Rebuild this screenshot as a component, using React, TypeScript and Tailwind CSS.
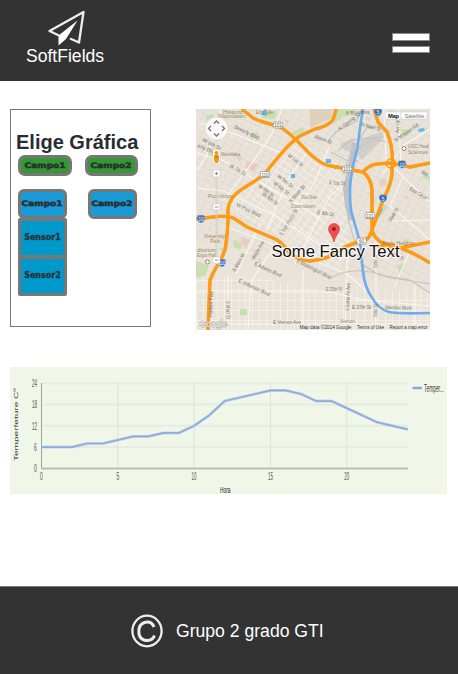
import React from "react";

const temps = [6, 6, 6, 7, 7, 8, 9, 9, 10, 10, 12, 15, 19, 20, 21, 22, 22, 21, 19, 19, 17, 15, 13, 12, 11];
const px = (h: number) => 31.5 + h * 15.26;
const py = (t: number) => 101.3 - t * 3.54;
const line = temps.map((t, h) => `${px(h)},${py(t)}`).join(" ");

type Label = [string, number, number, number, number];
const streets: Label[] = [
  ["Beverly Blvd", 234, 128, 26, 27],
  ["W 6th St", 202, 141, 28, 20],
  ["erly Blvd", 197, 147, 22, 20],
  ["W 7th St", 229, 167, 30, 18],
  ["W 1st St", 287, 156, 38, 18],
  ["W 8th St", 258, 187, 36, 18],
  ["W 9th St", 262, 195, 36, 18],
  ["W 5th St", 277, 177, 38, 18],
  ["W 6th St", 273, 184, 38, 18],
  ["W Pico Blvd", 236, 206, 26, 26],
  ["S Main St", 291, 203, -48, 22],
  ["S San Pedro St", 282, 236, -58, 30],
  ["N Broadway", 346, 115, -4, 24],
  ["N Spring St", 340, 131, -38, 26],
  ["N Main St", 361, 126, 15, 20],
  ["N Mission Rd", 396, 142, -35, 28],
  ["Alpine St", 314, 138, 20, 18],
  ["E 1st St", 329, 184, 5, 16],
  ["E 6th St", 317, 214, 8, 17],
  ["East Cesar", 409, 190, 30, 20],
  ["Wab", 421, 173, 28, 7],
  ["Ave Up", 399, 133, -88, 13],
  ["S Main St", 235, 272, -60, 20],
  ["Maple Ave", 254, 260, -60, 21],
  ["E Adams Blvd", 254, 265, 25, 29],
  ["E Jefferson Blvd", 238, 282, 25, 34],
  ["E Washington Blvd", 296, 262, 27, 38],
  ["Harbor Fwy", 212, 317, -88, 26],
  ["S Main St", 226, 301, 88, 18],
  ["E Vernon Ave", 273, 323.5, 0, 28],
  ["E 37th St", 352, 309, 0, 19],
  ["E 25th St", 326, 291, -2, 16],
  ["S Santa Fe Ave", 349, 311, -88, 28],
  ["Bandini Blvd", 385, 309, 2, 26],
  ["Soto St", 377, 268, -88, 13],
  ["Soto St", 377, 317, -88, 13],
  ["Lorena St", 389, 254, 25, 15],
  ["State St", 391, 222, -60, 15],
];
const places: Label[] = [
  ["Historic", 223, 113.5, 0, 20],
  ["Filipinotown", 218, 117.5, 0, 27],
  ["Westlake", 221, 156, 0, 19],
  ["Pico-Union", 208, 198, 0, 24],
  ["Downtown", 291, 208, 0, 24],
  ["Skid Row", 301, 199, 0, 16],
  ["University", 204, 238, 0, 21],
  ["Park", 210, 243, 0, 10],
  ["ditorium", 197, 252, 0, 19],
  ["Expo Hall", 197, 257, 0, 19],
  ["Boyle Heights", 382, 244.5, 0, 32],
  ["Vernon", 340, 323, 0, 15],
  ["USC Heal", 408, 148, 0, 21],
  ["Sciences", 408, 153.5, 0, 20],
  ["Echo Lake", 256, 113.5, 0, 17],
];

function SmallLabel({ item, fill }: { item: Label; fill: string }) {
  const [text, x, y, angle, width] = item;
  return (
    <text x={x} y={y} textLength={width} lengthAdjust="spacingAndGlyphs" transform={`rotate(${angle} ${x} ${y})`} fill={fill} opacity=".85">
      {text}
    </text>
  );
}

function Shield({ x, y, blue = false, label }: { x: number; y: number; blue?: boolean; label: string }) {
  return (
    <g transform={`translate(${x} ${y})`}>
      {blue ? (
        <>
          <path d="M-3.5-3.5 0-4 3.5-3.5 4 0Q3 3 0 4-3 3-4 0Z" fill="#2875b9" stroke="#aac8dc" strokeWidth=".5" />
          <path d="M-3-3.2H3V-2.2H-3Z" fill="#b65464" />
        </>
      ) : (
        <path d="M-4-3H4L5 0 4 3H-4L-5 0Z" fill="#fff" stroke="#8d887c" strokeWidth=".7" />
      )}
      <text y="2" textAnchor="middle" fontSize="4.5" fill={blue ? "#fff" : "#555"}>{label}</text>
    </g>
  );
}

const highways = "M228 220V211Q228 204 233 197C239 190 247 186 255 181Q266 174 270 167L280 155Q291 142 300 136L315 129Q332 125 334 117L336 109M242 109 253 118Q261 122 278 126C292 132 305 151 315 158Q323 165 331 166L347 169 363 172Q371 178 372 190L372 213V230Q374 238 382 243 405 247 430 263M374 109 378 122 387 132Q394 149 392 169 393 181 383 200L372 230Q370 239 363 241 350 244 343 248 331 259 310 261 295 260 287 250 281 241 273 238L247 227 235 219Q229 215 213 217L196 219M363 172Q369 165 377 164L391 163 410 167 430 163M228 217Q228 232 225 250L220 262Q216 266 210 280L208 330M377 246 400 248 430 242";

function StreetMap() {
  return (
    <svg className="block h-[221px] w-[234px] font-['Liberation_Sans',sans-serif]" viewBox="196 109 234 221" fontSize="5.3">
      <defs>
        <pattern id="west" width="8" height="6" patternUnits="userSpaceOnUse" patternTransform="rotate(26)">
          <path d="M0 .5H8M.5 0V6" stroke="#ded9cf" strokeWidth=".7" />
        </pattern>
        <pattern id="center" width="7" height="6" patternUnits="userSpaceOnUse" patternTransform="rotate(38)">
          <path d="M0 .5H7M.5 0V6" stroke="#f5f0e8" strokeWidth=".8" />
        </pattern>
        <pattern id="south" width="7" height="10" patternUnits="userSpaceOnUse">
          <path d="M0 .5H7M.5 0V10" stroke="#f5f1ea" strokeWidth=".8" />
        </pattern>
      </defs>
      <path d="M196 109H430V330H196Z" fill="#e9e3d9" />
      <path d="M196 109H430V285L330 275 245 250 196 240Z" fill="url(#west)" />
      <path d="M297 140 340 165 352 218 340 272 240 214 228 205Z" fill="url(#center)" />
      <path d="M196 274 260 278 325 291H430V330H196Z" fill="url(#south)" />
      <path d="M310 109H332V118L310 128Z" fill="#dfd2bd" />
      <path d="M267 109 277 112 275 119 262 118ZM336 109 359 109 343 117 333 124ZM209 150 220 154 216 161 207 155ZM219 248 228 247 224 254ZM196 261 209 266 205 276 196 278ZM240 309H247V315H240ZM397 265 403 264 404 270 399 272ZM402 239 408 240 406 246ZM376 213 383 203 388 207 380 217ZM422 173 430 176V181L423 178ZM250 134 258 132 259 137 251 139ZM292 133 302 127 306 132 297 137ZM258 259H261V263H258ZM205 116 213 114 215 118 207 121ZM402 129 410 130 408 136 402 134ZM234 239 242 245 240 250 233 246Z" fill="#c9dfb0" />
      <path d="M247 161 258 164 254 172 245 167ZM236 157 240 154 243 158 239 162ZM379 180 385 178 387 185 380 187ZM365 116 371 118 368 121ZM242 237 250 240 247 247 240 243ZM284 119 289 121 287 125ZM371 197 376 199 374 203ZM405 195 409 197 406 200Z" fill="#e8cdc3" />
      <path d="M361 139 383 131 383 139 362 160 357 155ZM340 144 355 138 353 152 344 150Z" fill="#d1cfcb" />
      <path d="M197 153 222 160 270 188 323 220M197 188 224 191 276 216 329 251M221 109 216 131 206 157 197 170M282 109 272 134 247 170 223 201M310 148 288 179 267 230M329 147 315 181 282 234M347 181 330 196 295 264M198 123 237 135 282 153M228 227 279 247 347 274 370 294M260 225 236 274M278 240 251 282 248 330M228 274V330M303 270V330M348 240 345 330M376 241V330M196 292H330L363 300 430 306M384 109 386 160 429 202M430 129 404 145 382 175M398 109 401 163M403 177 390 206 430 240M430 220 391 221M410 252 394 287M415 280V330M196 324H430" fill="none" stroke="#fbf7ef" strokeWidth="1.1" />
      <path d="M327 143Q336 129 345 127L357 121 362 109M338 151 350 140 384 137M344 174 351 151 367 128 380 126M358 148 374 139 386 142M331 152 346 160 358 161M348 185V219L365 276M363 265 379 275 410 280 430 293M330 278Q356 264 387 277L430 284" fill="none" stroke="#c3c3c3" strokeWidth="1.1" />
      <path d="M355 143 353 158 349 176 346 188 348 206 352 220" fill="none" stroke="#bfc1c4" strokeWidth="6" />
      <path d="M363 109 360 128 357.500 148Q353 164 351 178 349 191 351 211L360 242 363 272Q365 287 371 296 378 309 389 312 397 314 430 313" fill="none" stroke="#6eacf0" strokeWidth="2.6" />
      <path d="M263 111 266 109 267 116 261 115ZM377 215 380 208 383 209 379 217ZM418 129 424 128 425 131 419 132ZM291 174H295V178H291ZM326 159H331V163H326ZM334 165H338V169H334Z" fill="#62b6ea" />
      <path d={highways} fill="none" stroke="#e8a445" strokeWidth="3.5" strokeLinejoin="round" />
      <path d={highways} fill="none" stroke="#ff9b13" strokeWidth="2.9" strokeLinejoin="round" />
      <circle cx="391" cy="163.5" r="4.5" fill="none" stroke="#ff990c" strokeWidth="1.5" />
      {streets.map((s, i) => <SmallLabel key={i} item={s} fill="#625e58" />)}
      {places.map((p, i) => <SmallLabel key={i} item={p} fill="#8c7758" />)}
      <Shield x={278} y={125} label="101" /><Shield x={265} y={174.5} label="110" />
      <Shield x={347} y={169} label="101" /><Shield x={370} y={215.5} label="101" /><Shield x={361.5} y={241} label="60" />
      <Shield x={378} y={112} blue label="5" /><Shield x={402} y={164.5} blue label="10" /><Shield x={383} y={198.5} blue label="5" />
      <Shield x={201} y={219} blue label="10" /><Shield x={222} y={263} blue label="110" />
      <circle cx="404" cy="148.5" r="2" fill="#fff" stroke="#8b6651" strokeWidth=".8" />
      <circle cx="207.5" cy="262" r="2" fill="#fff" stroke="#8b6651" strokeWidth=".8" />
      <circle cx="216.5" cy="128.5" r="11.5" fill="#faf9f7" stroke="#d5d0c9" strokeWidth=".6" />
      <path d="m214 123.500 2.500-2.500 2.500 2.500m-5 10 2.500 2.500 2.500-2.500m-8-7.500-2.500 2.500 2.500 2.500m11-5 2.500 2.500-2.500 2.500" fill="none" stroke="#777" strokeWidth="1.4" />
      <path d="M216.500 173V260" stroke="#d1ccc4" strokeWidth="2" opacity=".6" />
      <path d="M213 150H220V164H213Z" fill="#fff" stroke="#cfc9bd" strokeWidth=".5" />
      <circle cx="216.5" cy="153" r="2" fill="#f39a1e" />
      <path d="M214 155H219V160L218 163H215L214 160Z" fill="#f39a1e" />
      <path d="M215 157H218" stroke="#b66b0c" />
      <path d="M213 170H220V177H213ZM213 204H220V210H213ZM213 257H220V263.500H213Z" fill="#fff" stroke="#c4c0b8" strokeWidth=".5" />
      <path d="M215 173.500H218M216.500 172V175M215 207H218.500M215 260H218.500" stroke="#777" strokeWidth=".8" />
      <path d="M385 112H427V119H385Z" fill="#fff" stroke="#c8c4bd" strokeWidth=".5" />
      <path d="M401 112V119" stroke="#c8c4bd" strokeWidth=".7" />
      <text x="388" y="117.5" fontSize="5.8" fontWeight="700" textLength="11" fill="#111">Map</text>
      <text x="404.5" y="117.5" fontSize="5.8" textLength="20" fill="#777">Satellite</text>
      <text x="199.5" y="327" fontSize="9.5" textLength="28" lengthAdjust="spacingAndGlyphs" fill="#f4f2ee" stroke="#aaa49a" strokeWidth="1" paintOrder="stroke">Google</text>
      <path d="M297 324.500H430V330H297Z" fill="#eee9e2" opacity=".85" />
      <g fill="#333" fontSize="5.6">
        <text x="299.5" y="329" textLength="52" lengthAdjust="spacingAndGlyphs">Map data ©2014 Google</text>
        <text x="357" y="329" textLength="27" lengthAdjust="spacingAndGlyphs">Terms of Use</text>
        <text x="389.5" y="329" textLength="38" lengthAdjust="spacingAndGlyphs">Report a map error</text>
      </g>
      <path d="M334 242C333 236 328.500 233 328.500 229A5.500 5.500 0 0 1 339.500 229C339.500 233 335 236 334 242Z" fill="#f84b4b" stroke="#c63e3e" strokeWidth=".6" />
      <circle cx="334" cy="229" r="2" fill="#862d2d" />
      <text x="271.5" y="256.5" fontSize="16" textLength="128" lengthAdjust="spacingAndGlyphs" fill="#111" stroke="#fff" strokeWidth="2.5" strokeOpacity=".75" paintOrder="stroke">Some Fancy Text</text>
    </svg>
  );
}

function TemperatureChart() {
  return (
    <svg viewBox="0 0 437 127" className="mt-[37px] ml-[10px] block h-[127px] w-[437px] bg-[#f0f6e8] font-['Liberation_Sans',sans-serif]" fontSize="10.5">
      {[24, 18, 12, 6].map(v => <path key={v} d={`M31.5 ${py(v)}H398`} stroke="#e8ece2" strokeWidth="2" />)}
      {[5, 10, 15, 20].map(v => <path key={v} d={`M${px(v)} 16V102`} stroke="#dfe4d8" strokeWidth="1" />)}
      <path d="M31.500 16V101.500" stroke="#9ca497" strokeWidth="1" />
      <path d="M31 101.500H398" stroke="#b9bfb3" strokeWidth="2" />
      <polyline points={line} fill="none" stroke="#c5d6e7" strokeWidth="3" strokeLinejoin="round" />
      <polyline points={line} fill="none" stroke="#8cacdd" strokeWidth="1.7" strokeLinejoin="round" />
      <g fill="#50564e">
        {[24, 18, 12, 6, 0].map(v => <text key={v} x={v > 9 ? 22 : 24} y={py(v) + 3.7} textLength={v > 9 ? 5 : 2.8} lengthAdjust="spacingAndGlyphs">{v}</text>)}
        {[0, 5, 10, 15, 20].map(v => <text key={v} x={px(v) - (v > 9 ? 2.5 : 1.4)} y="113" textLength={v > 9 ? 5 : 2.8} lengthAdjust="spacingAndGlyphs">{v}</text>)}
      </g>
      <text x="210" y="125.5" fontSize="9.5" textLength="10.5" lengthAdjust="spacingAndGlyphs" fill="#222">Hora</text>
      <text transform="translate(8 94) rotate(-90)" fontSize="5.8" textLength="73" lengthAdjust="spacingAndGlyphs" fill="#333">Temperfeture Cº</text>
      <path d="M402.500 21H412" stroke="#88a8dd" strokeWidth="2.5" />
      <text x="414" y="24.5" fontSize="10.5" textLength="20" lengthAdjust="spacingAndGlyphs" fill="#444">Temper...</text>
    </svg>
  );
}

const buttonBase = "flex items-center justify-center border-[3px] border-[#777] font-['DejaVu_Sans',sans-serif] font-bold text-[#2b3035]";

function Campo({ children, className }: { children: string; className: string }) {
  return (
    <button className={`${buttonBase} ${className}`}>
      <span className="inline-block scale-x-[1.2] text-[7.5px] leading-[10px] [-webkit-text-stroke:0.6px_#2b3035]">{children}</span>
    </button>
  );
}

function Sensor({ children, className }: { children: string; className: string }) {
  return (
    <button className={`${buttonBase} h-10 rounded-[2px] bg-[#0099cc] ${className}`}>
      <span className="inline-block text-[8px] leading-[10px] [-webkit-text-stroke:0.3px_#2b3035]">{children}</span>
    </button>
  );
}

export default function App() {
  return (
    <div className="flex h-[674px] w-[458px] flex-col overflow-hidden bg-white font-['Liberation_Sans',Arial,sans-serif]">
      <header className="flex h-[81px] shrink-0 justify-between bg-[#333] pr-7 pl-[26px] text-white">
        <div className="flex w-[78px] flex-col items-center pt-[10px]">
          <svg viewBox="0 0 38 37" className="ml-[3px] h-[37px] w-[38px] shrink-0">
            <path d="M11 25.500 1.500 21 35.500 2 31 32.500 22 28.500" fill="none" stroke="#eee" strokeWidth="2.3" strokeLinejoin="round" />
            <path d="M29.500 10.500 10.500 25.500V35.500L18 29Z" fill="#fff" />
          </svg>
          <span className="text-[17.6px] leading-[18px]">SoftFields</span>
        </div>
        <div className="flex flex-col gap-[5px] pt-[33px]">
          <div className="h-2 w-[38px] border border-[#888] bg-white" />
          <div className="h-[7px] w-[38px] border border-[#888] bg-white" />
        </div>
      </header>
      <main className="h-[505px] shrink-0 pt-7">
        <div className="flex pl-[10px]">
          <section className="h-[218px] w-[141px] border border-[#777] pt-[20px] pl-[5px]">
            <h2 className="mb-px text-[20px] leading-6 font-bold whitespace-nowrap text-[#292d32]">Elige Gráfica</h2>
            <div className="ml-[2px] flex gap-[13px]">
              <Campo className="h-[21px] w-[54px] rounded-[7px] bg-[#339933]">Campo1</Campo>
              <Campo className="h-[21px] w-[53px] rounded-[7px] bg-[#339933]">Campo2</Campo>
            </div>
            <div className="mt-[13px] ml-[2px] flex gap-[21px]">
              <div className="flex w-[49px] flex-col">
                <Campo className="h-[30px] rounded-[6px] bg-[#1a9ad6]">Campo1</Campo>
                <Sensor className="-mt-px">Sensor1</Sensor>
                <Sensor className="-mt-[2px]">Sensor2</Sensor>
              </div>
              <Campo className="h-[30px] w-[49px] rounded-[6px] bg-[#1a9ad6]">Campo2</Campo>
            </div>
          </section>
          <div className="ml-[45px]"><StreetMap /></div>
        </div>
        <TemperatureChart />
      </main>
      <footer className="flex h-[88px] shrink-0 items-center border-t border-[#777] bg-[#333] pl-[131px] text-white">
        <svg viewBox="0 0 32 34" className="h-[34px] w-8">
          <ellipse cx="16" cy="17" rx="14.6" ry="15.3" fill="none" stroke="#eee" strokeWidth="2.3" />
          <path d="M23 13C21 8 17 7.500 13.500 8.500 6 11 6 23.500 13 26 17 27 21.500 26.500 23.500 21.500" fill="none" stroke="#eee" strokeWidth="3" />
        </svg>
        <span className="ml-[13px] text-[17.6px] leading-5">Grupo 2 grado GTI</span>
      </footer>
    </div>
  );
}
